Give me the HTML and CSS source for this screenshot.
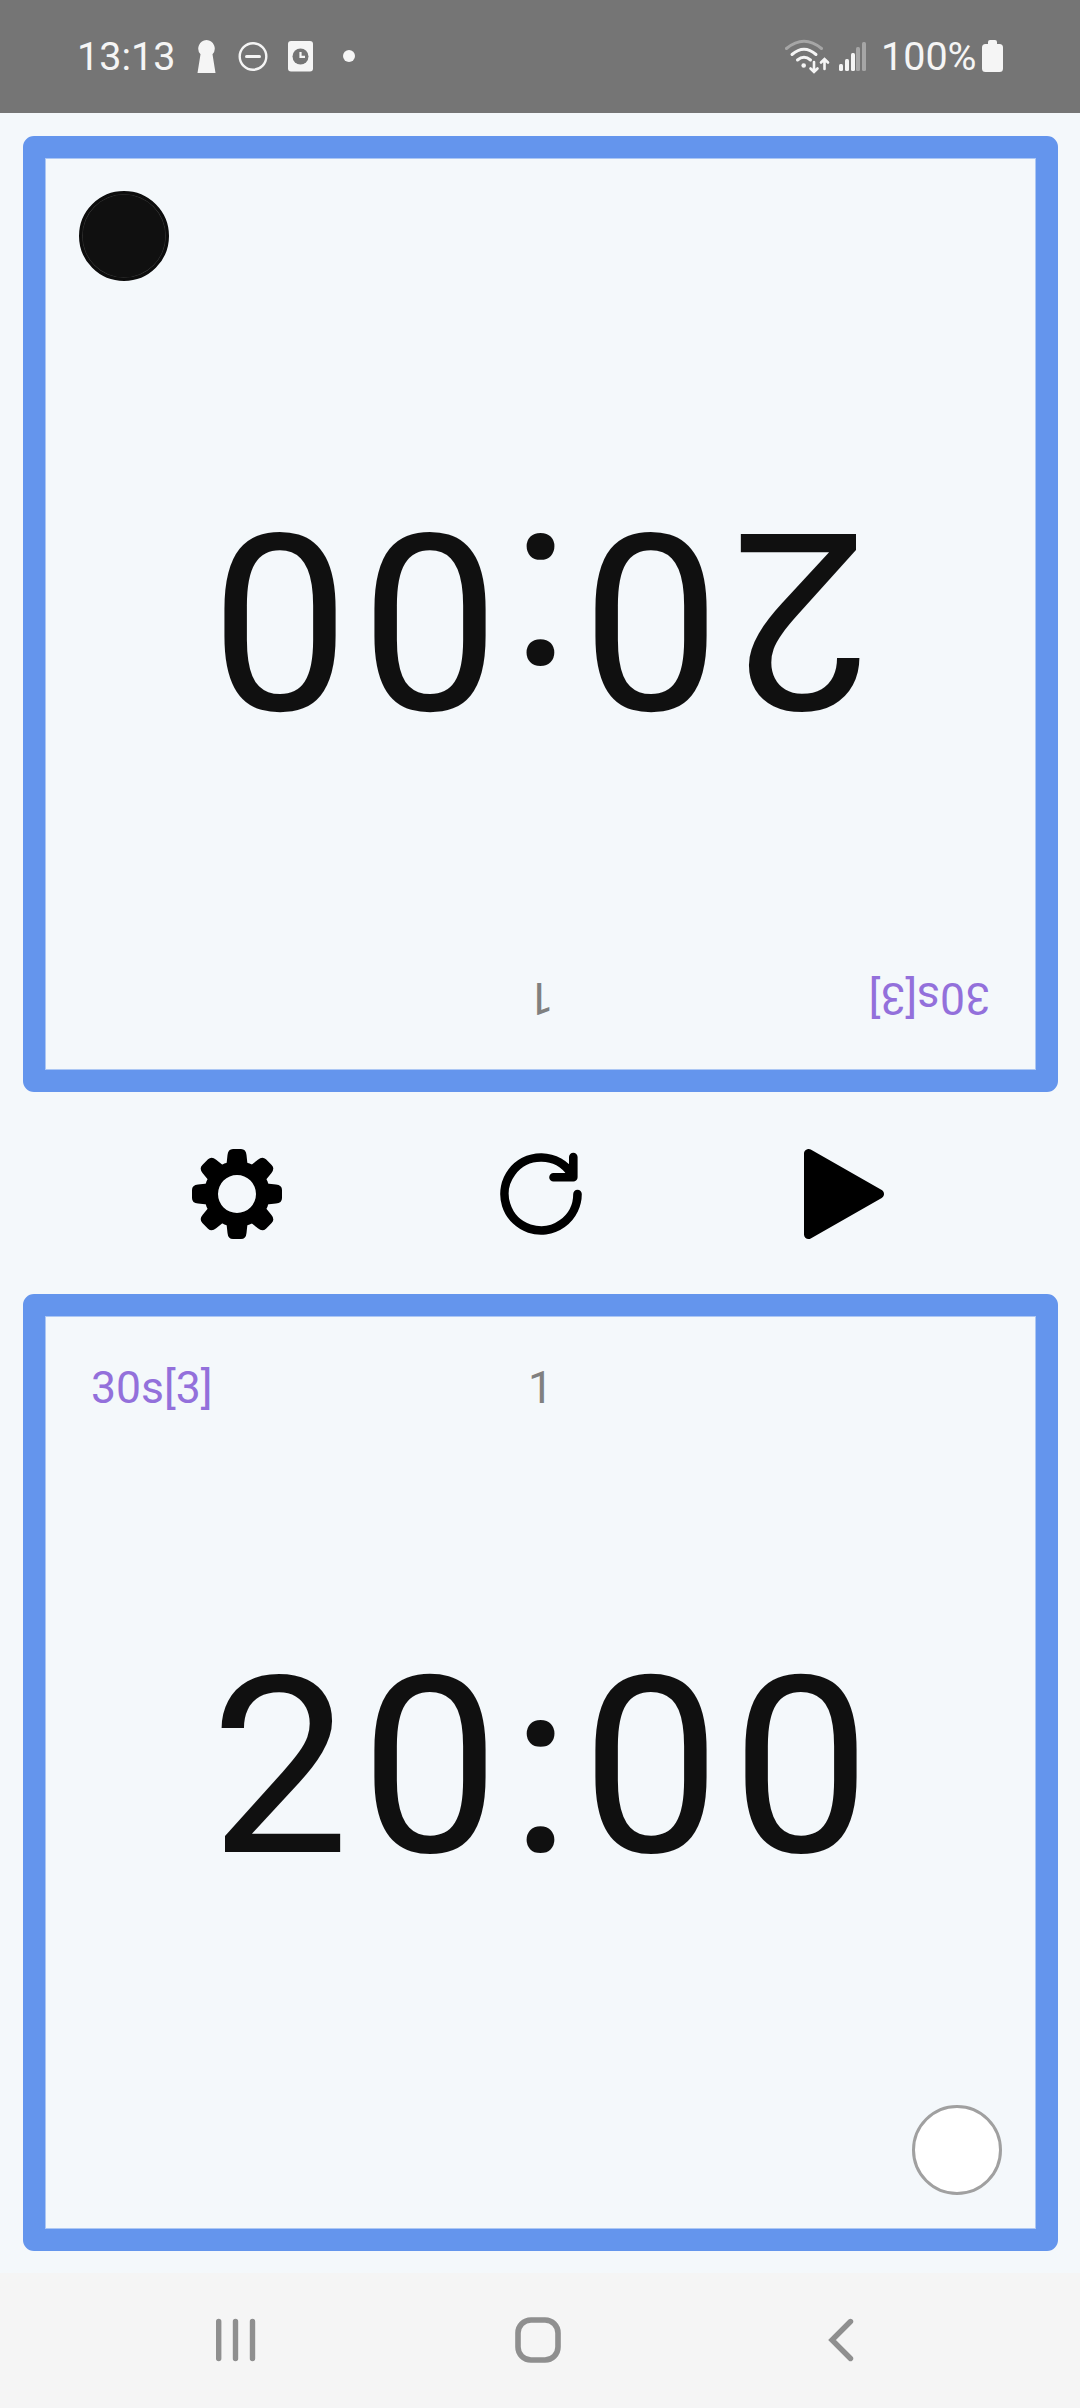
FILE: index.html
```html
<!DOCTYPE html>
<html lang="en">
<head>
<meta charset="utf-8">
<title>Game clock</title>
<link rel="stylesheet" href="styles.css">
</head>
<body>
<div class="screen">
  <header class="status">
    <span class="status-text clock">13:13</span>
    <svg class="ic keyhole" width="19" height="35" viewBox="0 0 19 35"><path d="M9.500 1a8.500 8.500 0 0 1 6 14.200L18.500 34H.5L3.500 15.200A8.500 8.500 0 0 1 9.500 1z" fill="#f5f5f5"/></svg>
    <svg class="ic dnd" width="30" height="35" viewBox="0 0 30 35"><circle cx="15" cy="17.500" r="13.300" fill="none" stroke="#f5f5f5" stroke-width="2.400"/><path d="M8.500 17.500h13" stroke="#f5f5f5" stroke-width="3" stroke-linecap="round"/></svg>
    <svg class="ic alarm" width="25" height="35" viewBox="0 0 25 35"><rect x="0" y="2" width="25" height="30.500" rx="3" fill="#f5f5f5"/><circle cx="12.500" cy="17.500" r="8" fill="#757575"/><path d="M12.500 13v4.800h4.500" fill="none" stroke="#f5f5f5" stroke-width="2.200"/></svg>
    <svg class="ic dot" width="12" height="35" viewBox="0 0 12 35"><circle cx="6" cy="17" r="6" fill="#f5f5f5"/></svg>
    <svg class="ic wifi" width="45" height="35" viewBox="0 0 45 35"><g fill="none" stroke="#f5f5f5" stroke-width="3" stroke-linecap="round"><path d="M1.500 9.500Q19 -5 36.500 9.500" stroke="#a6a6a6"/><path d="M7 15.500Q19 5 31 15.500"/><path d="M12.500 21Q19 15.500 25.500 21"/><path d="M29 23v9M25.500 29.500l3.500 3.500 3.500-3.500M39.500 30v-9M36 23.500l3.500-3.500 3.500 3.500" stroke-width="2.600"/></g><circle cx="18.700" cy="26.500" r="2.300" fill="#f5f5f5"/></svg>
    <svg class="ic signal" width="28" height="35" viewBox="0 0 28 35"><g fill="#f5f5f5"><rect x="0" y="25" width="4" height="7" rx="1.500"/><rect x="6" y="20" width="4" height="12" rx="1.500"/><rect x="12" y="14" width="4" height="18" rx="1.500"/></g><g fill="#a6a6a6"><rect x="17" y="8" width="4" height="24" rx="1.500"/><rect x="23" y="3" width="4" height="29" rx="1.500"/></g></svg>
    <span class="status-text level">100%</span>
    <svg class="ic battery" width="21" height="35" viewBox="0 0 21 35"><path d="M6 3q0-2 2-2h5q2 0 2 2v2h2.500Q21 5 21 8.500V29.500Q21 33 17.500 33h-14Q0 33 0 29.500V8.500Q0 5 3.500 5H6z" fill="#f5f5f5"/></svg>
  </header>

  <main class="board">
    <section class="player flipped">
      <div class="head"><span class="byoyomi">30s[3]</span><span class="moves">1</span></div>
      <div class="time">20:00</div>
      <div class="foot"><span class="stone black"></span></div>
    </section>

    <nav class="controls">
      <svg width="90" height="90" viewBox="0 0 90 90"><defs><path id="tooth" d="M34 20L35.500 6Q36 0 41 0h8Q54 0 54.500 6L56 20z"/></defs><path fill-rule="evenodd" d="M45 12a33 33 0 1 0 0 66a33 33 0 1 0 0-66zM45 26a19 19 0 1 1 0 38a19 19 0 1 1 0-38z"/><use href="#tooth"/><use href="#tooth" transform="rotate(45 45 45)"/><use href="#tooth" transform="rotate(90 45 45)"/><use href="#tooth" transform="rotate(135 45 45)"/><use href="#tooth" transform="rotate(180 45 45)"/><use href="#tooth" transform="rotate(225 45 45)"/><use href="#tooth" transform="rotate(270 45 45)"/><use href="#tooth" transform="rotate(315 45 45)"/></svg>
      <svg width="90" height="90" viewBox="0 0 90 90"><path d="M81.500 45A36.500 36.500 0 1 1 75 24.200M77.300 8v20.300H57.500" fill="none" stroke="#000" stroke-width="8.600" stroke-linecap="round" stroke-linejoin="round"/></svg>
      <svg width="90" height="90" viewBox="0 0 90 90"><path d="M9.500 4.500v81L80.500 45z" stroke="#000" stroke-width="9" stroke-linejoin="round"/></svg>
    </nav>

    <section class="player">
      <div class="head"><span class="byoyomi">30s[3]</span><span class="moves">1</span></div>
      <div class="time">20:00</div>
      <div class="foot"><span class="stone white"></span></div>
    </section>
  </main>

  <footer class="system-nav">
    <svg width="40" height="46" viewBox="0 0 40 46"><path d="M2.700 4.500v37M19.500 4.500v37M36.500 4.500v37" stroke="#8f8f8f" stroke-width="5.400" stroke-linecap="round"/></svg>
    <svg class="home" width="46" height="46" viewBox="0 0 46 46"><rect x="3" y="3" width="40" height="40" rx="13" fill="none" stroke="#8f8f8f" stroke-width="5.600"/></svg>
    <svg width="26" height="46" viewBox="0 0 26 46"><path d="M22.500 4.500L4 23l18.500 18.500" fill="none" stroke="#8f8f8f" stroke-width="5.400" stroke-linecap="round"/></svg>
  </footer>
</div>
</body>
</html>
```

FILE: styles.css
```css
* { box-sizing: border-box; }
body {
  margin: 0;
  font-family: Roboto, "Noto Sans", sans-serif;
}
svg { display: block; flex: none; }
.screen {
  width: 1080px;
  height: 2408px;
  display: flex;
  flex-direction: column;
  background: #f4f8fb;
  overflow: hidden;
}

.status {
  height: 113px;
  display: flex;
  align-items: center;
  padding: 0 77px;
  background: #757575;
  color: #f5f5f5;
}
.status-text { font-size: 39.5px; line-height: 46px; white-space: nowrap; }
.clock { width: 120px; }
.dnd { margin-left: 22px; }
.alarm { margin-left: 20px; }
.dot { margin-left: 30px; }
.wifi { margin-left: auto; }
.signal { margin-left: 9px; }
.level { width: 101px; margin-left: 14px; }

.board {
  height: 2160px;
  padding: 23px 22px 22px 23px;
  display: flex;
  flex-direction: column;
}
.player {
  height: 957px;
  border: 22px solid #6495ed;
  border-radius: 11px;
  box-shadow: inset 0 0 0 1px #acc7f4;
  display: grid;
  grid-template-rows: 124px 1fr 136px;
}
.flipped {
  height: 956px;
  grid-template-rows: 124px 1fr 134px;
  transform: rotate(180deg);
}
.head {
  display: grid;
  grid-template-columns: 1fr auto 1fr;
  padding: 46px 46px 0;
  font-size: 44.5px;
  line-height: 53px;
}
.byoyomi { color: #9370db; }
.moves { color: #808080; }
.time {
  place-self: center;
  padding-left: 11px;
  font-size: 247.5px;
  line-height: 290px;
  letter-spacing: 11px;
  color: #101010;
}
.foot {
  display: flex;
  justify-content: flex-end;
  align-items: flex-end;
  padding: 0 34px 34px 0;
}
.flipped .foot { padding-bottom: 33px; }
.stone { width: 90px; height: 90px; border-radius: 50%; }
.white { background: #fff; border: 3px solid #a0a0a0; }
.black { background: #101010; border: 3px solid #0d0d0d; box-shadow: inset 0 0 0 0.6px #3c3c3c; }

.controls {
  height: 202px;
  display: flex;
  align-items: center;
  justify-content: space-between;
  padding: 2px 169px 0 169px;
}

.system-nav {
  flex: 1;
  display: flex;
  align-items: center;
  justify-content: space-between;
  padding: 0 226px 1px 216px;
  background: #f5f5f5;
}
.home { margin-right: 8px; }
```
